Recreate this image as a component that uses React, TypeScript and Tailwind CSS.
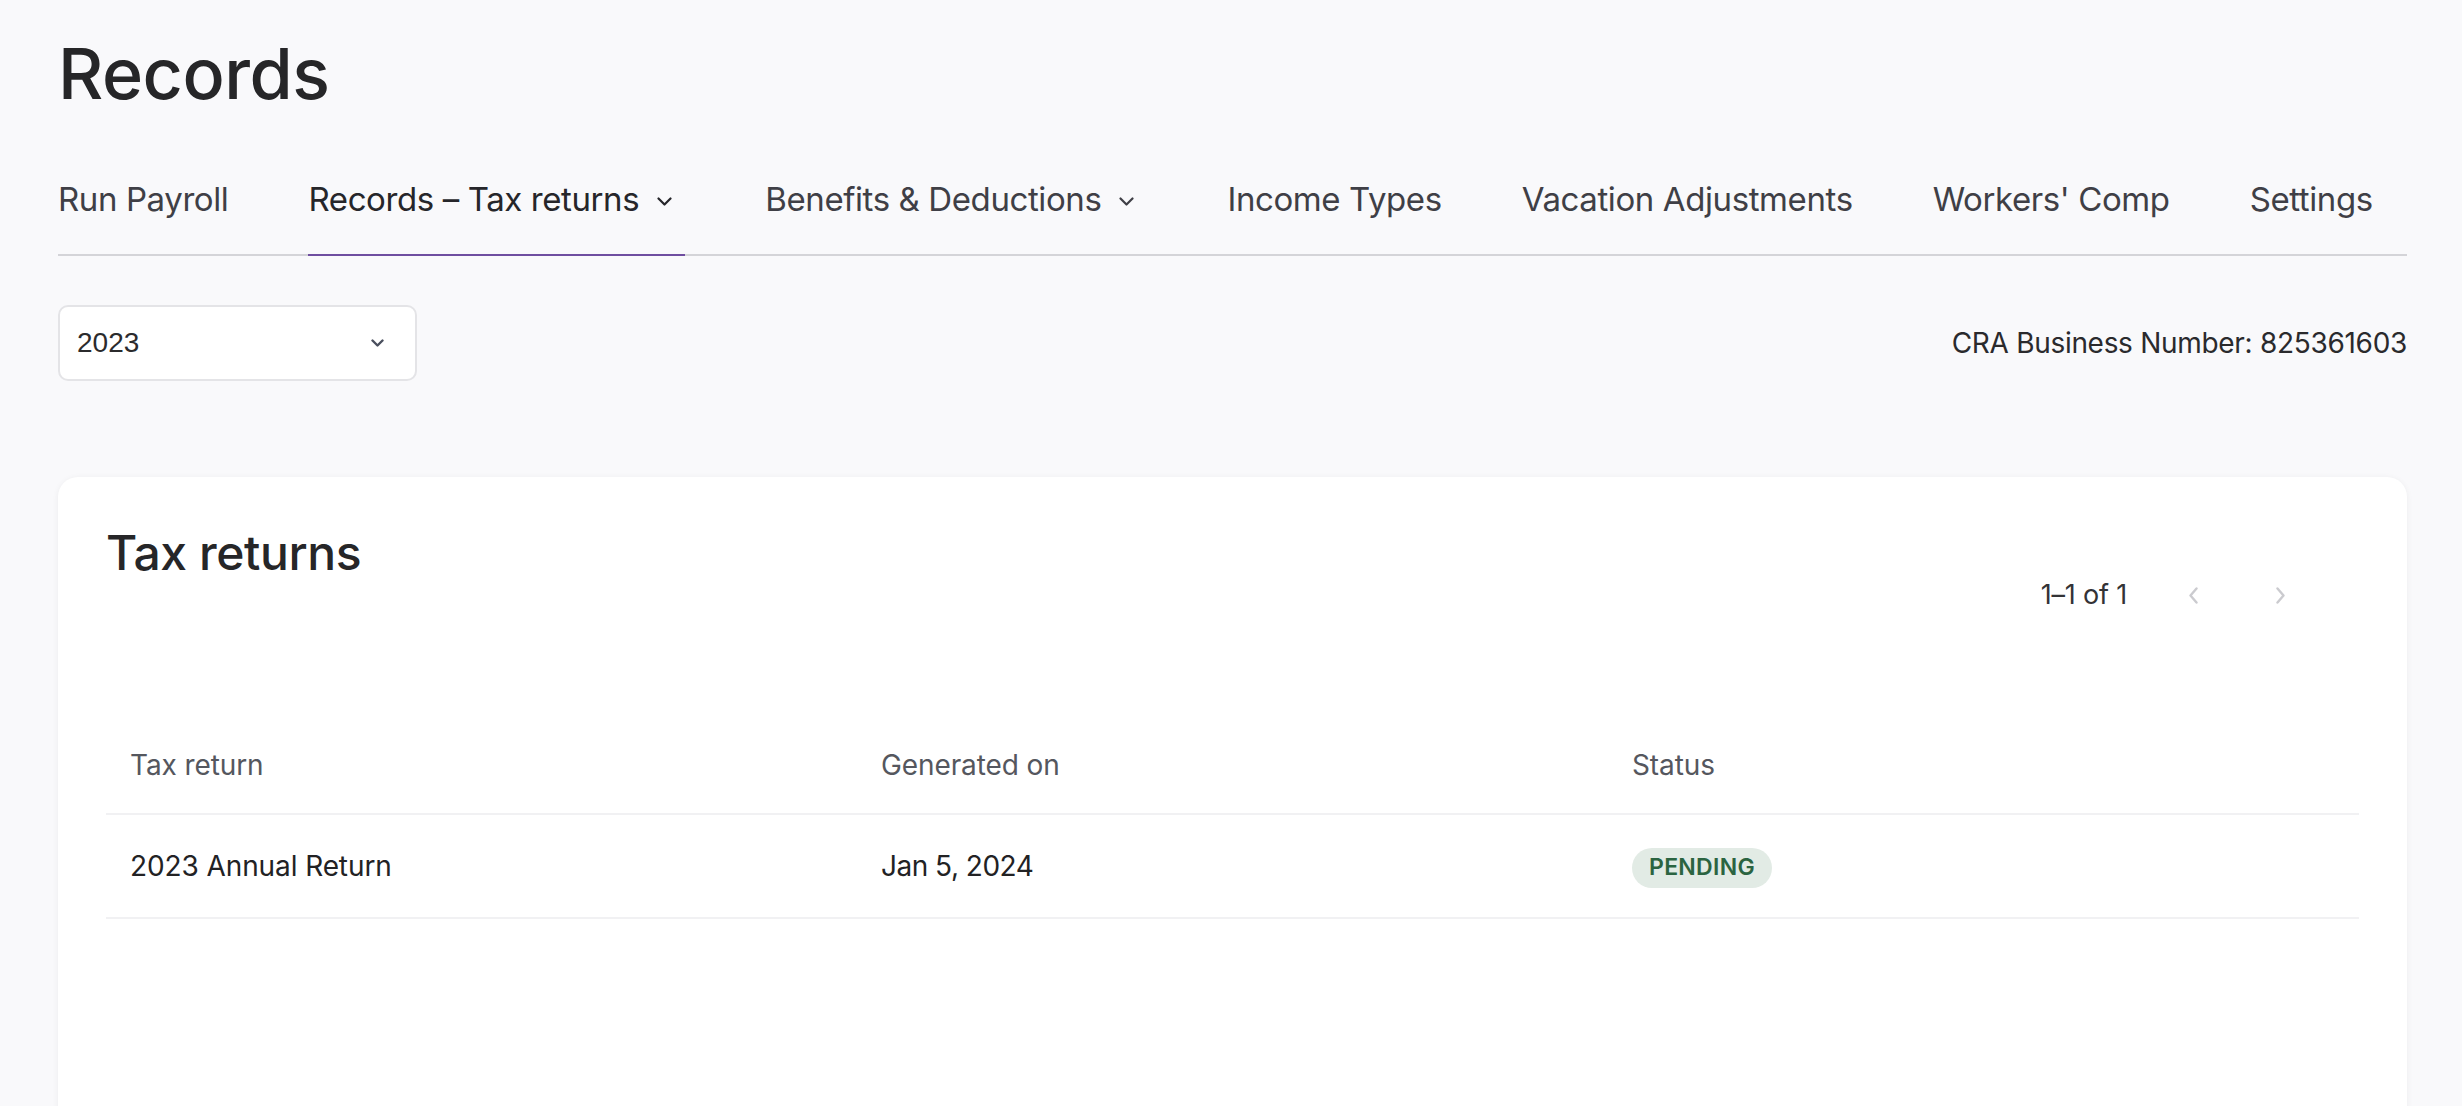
import React from "react";

type Tab = { label: string; dropdown?: boolean; active?: boolean };

const tabs: Tab[] = [
  { label: "Run Payroll" },
  { label: "Records – Tax returns", dropdown: true, active: true },
  { label: "Benefits & Deductions", dropdown: true },
  { label: "Income Types" },
  { label: "Vacation Adjustments" },
  { label: "Workers' Comp" },
  { label: "Settings" },
];

function ChevronDown({ className }: { className?: string }) {
  return (
    <svg className={className} width="15" height="9" viewBox="0 0 15 9" fill="none">
      <path d="M1.5 1.5l6 6 6-6" stroke="currentColor" strokeWidth="2.2" strokeLinecap="round" strokeLinejoin="round" />
    </svg>
  );
}

function ChevronSide({ dir }: { dir: "left" | "right" }) {
  return (
    <svg width="11" height="17" viewBox="0 0 11 17" fill="none">
      <path
        d={dir === "left" ? "M8.5 1.5l-6 7 6 7" : "M2.5 1.5l6 7-6 7"}
        stroke="currentColor"
        strokeWidth="2.4"
        strokeLinecap="round"
        strokeLinejoin="round"
      />
    </svg>
  );
}

export default function App() {
  return (
    <div className="h-[1106px] overflow-hidden bg-[#f9f9fb] pl-[58px] pr-[55px] pt-[30px] [font-family:Inter,'Noto_Sans',sans-serif] text-[#27272a]">
      <h1 className="text-[70px] leading-[88px] font-medium tracking-[-0.5px] text-[#262628]">Records</h1>

      <nav className="mt-[62px] flex gap-[80px] border-b-2 border-[#d4d4d8]">
        {tabs.map((t) => (
          <div
            key={t.label}
            className={
              t.active
                ? "-mb-[2px] flex items-start border-b-2 border-[#6f4ea0] pb-[36px] text-[#26262a]"
                : "-mb-[2px] flex items-start border-b-2 border-transparent pb-[36px] text-[#3f3f46]"
            }
          >
            <span className="text-[33px] leading-[38px] tracking-[-0.4px] whitespace-nowrap">{t.label}</span>
            {t.dropdown && <ChevronDown className="ml-[18px] mr-[13px] mt-[17px]" />}
          </div>
        ))}
      </nav>

      <div className="mt-[49px] flex items-center justify-between">
        <div className="flex h-[76px] w-[359px] items-center justify-between rounded-[10px] border-2 border-[#e4e4e7] bg-white pl-[17px] pr-[31px]">
          <span className="[font-family:'Liberation_Sans',Arial,sans-serif] text-[28px] text-[#2b2b2d]">2023</span>
          <svg width="13" height="8" viewBox="0 0 13 8" fill="none" className="text-[#4a4f5e]">
            <path d="M1.5 1.5l5 5 5-5" stroke="currentColor" strokeWidth="2.4" strokeLinecap="round" strokeLinejoin="round" />
          </svg>
        </div>
        <span className="text-[28px] tracking-[-0.3px] text-[#2a2a2d]">CRA Business Number: 825361603</span>
      </div>

      <section className="mt-[96px] h-[800px] rounded-[20px] bg-white px-[48px] pt-[48px] shadow-[0_1px_6px_rgba(0,0,0,0.06)]">
        <div className="flex items-start justify-between">
          <h2 className="text-[48px] leading-[56px] font-medium tracking-[-0.4px] text-[#262628]">Tax returns</h2>
          <div className="mt-[46px] flex h-[48px] items-center pr-[51px]">
            <span className="text-[27px] tracking-[-0.2px] text-[#333336]">1–1 of 1</span>
            <button className="ml-[38px] flex h-[48px] w-[56px] items-center justify-center text-[#cbcbcf]">
              <ChevronSide dir="left" />
            </button>
            <button className="ml-[31px] flex h-[48px] w-[56px] items-center justify-center text-[#cbcbcf]">
              <ChevronSide dir="right" />
            </button>
          </div>
        </div>

        <div className="mt-[98px]">
          <div className="grid h-[98px] grid-cols-3 items-center border-b-2 border-[#f1f1f3] text-[28px] tracking-[-0.1px] text-[#55575e]">
            <div className="pl-[24px]">Tax return</div>
            <div className="pl-[24px]">Generated on</div>
            <div className="pl-[24px]">Status</div>
          </div>
          <div className="grid h-[104px] grid-cols-3 items-center border-b-2 border-[#f1f1f3] text-[28px] tracking-[-0.1px] text-[#222224]">
            <div className="pl-[24px]">2023 Annual Return</div>
            <div className="pl-[24px] tracking-[-0.5px]">Jan 5, 2024</div>
            <div className="pl-[24px]">
              <span className="inline-flex h-[40px] items-center rounded-full bg-[#e2ebe5] px-[17px] text-[23px] font-semibold tracking-[0.3px] text-[#2b6441]">
                PENDING
              </span>
            </div>
          </div>
        </div>
      </section>
    </div>
  );
}
